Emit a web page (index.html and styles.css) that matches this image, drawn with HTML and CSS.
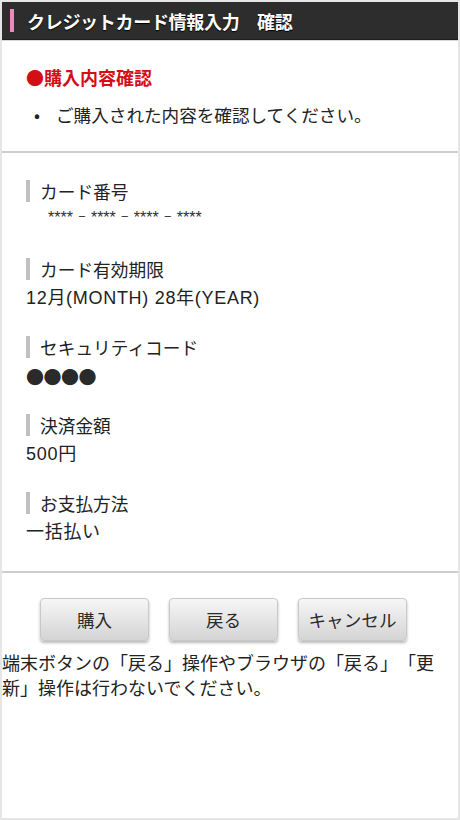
FILE: index.html
```html
<!DOCTYPE html>
<html lang="ja">
<head>
<meta charset="utf-8">
<title>クレジットカード情報入力 確認</title>
<link rel="stylesheet" href="styles.css">
</head>
<body>
<div class="page">
  <header class="hdr">
    <span class="hdr-bar"></span>
    <h1 class="hdr-title">クレジットカード情報入力　確認</h1>
  </header>

  <section class="intro">
    <h2 class="intro-title">●購入内容確認</h2>
    <div class="bullet-row"><span class="bullet">•</span><span>ご購入された内容を確認してください。</span></div>
  </section>

  <section class="fields">
    <div class="field">
      <div class="label">カード番号</div>
      <div class="value card"><span class="ast">****</span><span class="sep">_</span><span class="ast">****</span><span class="sep">_</span><span class="ast">****</span><span class="sep">_</span><span class="ast">****</span></div>
    </div>
    <div class="field">
      <div class="label">カード有効期限</div>
      <div class="value">12月(MONTH) 28年(YEAR)</div>
    </div>
    <div class="field">
      <div class="label">セキュリティコード</div>
      <div class="value dots">●●●●</div>
    </div>
    <div class="field">
      <div class="label">決済金額</div>
      <div class="value">500円</div>
    </div>
    <div class="field">
      <div class="label">お支払方法</div>
      <div class="value">一括払い</div>
    </div>
  </section>

  <div class="actions">
    <button class="btn" type="button">購入</button>
    <button class="btn" type="button">戻る</button>
    <button class="btn" type="button">キャンセル</button>
  </div>

  <p class="note">端末ボタンの「戻る」操作やブラウザの「戻る」「更新」操作は行わないでください。</p>
</div>
</body>
</html>
```

FILE: styles.css
```css
html {
  background: #e6e6e6;
}
body {
  margin: 0;
  padding: 2px;
  font-family: "Liberation Sans", "Noto Sans CJK JP", sans-serif;
  color: #222;
  text-spacing-trim: space-all;
}
.page {
  background: #fff;
  height: 816px;
  overflow: hidden;
}
.hdr {
  display: flex;
  align-items: center;
  height: 37px;
  background: #2d2d2d;
  border-bottom: 1px solid #1f1f1f;
  box-shadow: 0 1px 0 #d8d8d8;
  padding-left: 8px;
}
.hdr-bar {
  width: 4px;
  height: 23px;
  background: #f088c0;
  margin-top: -1px;
}
.hdr-title {
  margin: 0 0 0 13px;
  font-family: "Noto Sans CJK JP", sans-serif;
  font-size: 18px;
  font-weight: bold;
  color: #fff;
  letter-spacing: -0.3px;
  text-shadow: 0 1px 1px #000;
  line-height: 24px;
}
.intro {
  padding: 23px 24px 22px;
  border-bottom: 2px solid #cdcdcd;
}
.intro-title {
  margin: 0;
  font-family: "Noto Sans CJK JP", sans-serif;
  font-size: 18px;
  line-height: 28px;
  font-weight: bold;
  color: #d50d17;
}
.bullet-row {
  display: flex;
  margin-top: 10px;
  font-family: "Noto Sans CJK JP", sans-serif;
  font-size: 17.6px;
  line-height: 28px;
}
.bullet {
  width: 30px;
  padding-left: 8px;
  box-sizing: border-box;
}
.fields {
  padding: 24px 24px 24px;
  border-bottom: 2px solid #cdcdcd;
  display: flex;
  flex-direction: column;
  gap: 20px;
}
.label {
  font-family: "Noto Sans CJK JP", sans-serif;
  font-size: 17.7px;
  line-height: 28px;
  border-left: 4px solid #c0c0c0;
  padding-left: 10px;
  height: 22px;
  margin: 3px 0;
  display: flex;
  align-items: center;
}
.value {
  font-size: 18px;
  line-height: 30px;
  letter-spacing: 0.7px;
}
.value.card {
  display: flex;
  align-items: flex-start;
  height: 20px;
  padding: 0 0 10px 22px;
  font-family: "DejaVu Sans", sans-serif;
  font-size: 12px;
  line-height: 12px;
  letter-spacing: 0;
  color: #333;
}
.ast {
  margin-top: 4.5px;
  font-family: "Liberation Sans", sans-serif;
  font-size: 16px;
  line-height: 16px;
  white-space: nowrap;
  color: #2e2e2e;
}
.sep {
  width: 6px;
  margin: -1px 6px 0 6px;
}
.value.dots {
  font-family: "Noto Sans CJK JP", sans-serif;
  letter-spacing: -0.5px;
  color: #2a2a2a;
}
.actions {
  display: flex;
  gap: 20px;
  padding: 25px 0 0 38px;
}
.btn {
  width: 109px;
  height: 43px;
  border: 1px solid #c9c9c9;
  border-radius: 4px;
  background: linear-gradient(#f6f6f6, #d4d4d4);
  box-shadow: 0 2px 3px rgba(0, 0, 0, 0.28);
  font-family: "Noto Sans CJK JP", sans-serif;
  font-size: 17.6px;
  color: #2a2a2a;
  padding: 0;
}
.note {
  margin: 9px 0 0;
  font-family: "Noto Sans CJK JP", sans-serif;
  font-size: 18px;
  line-height: 25px;
  color: #222;
}
```
